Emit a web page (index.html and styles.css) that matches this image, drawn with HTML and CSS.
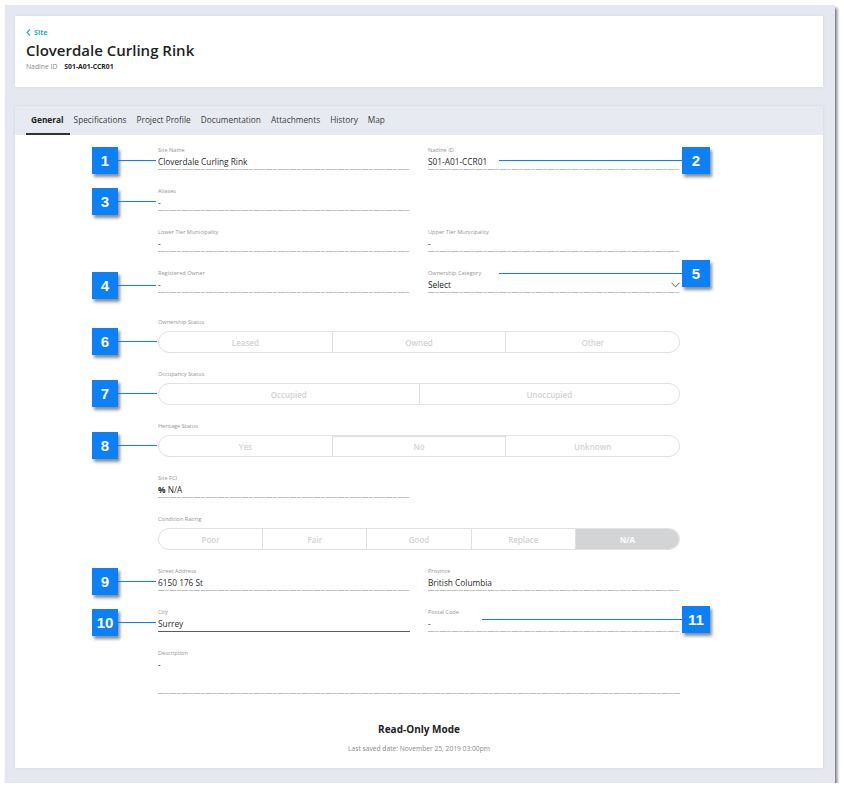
FILE: index.html
```html
<!DOCTYPE html>
<html lang="en">
<head>
<meta charset="utf-8">
<title>Cloverdale Curling Rink</title>
<link rel="stylesheet" href="styles.css">
</head>
<body>
<div class="frame">
  <header class="head-card">
    <a class="back"><svg class="back-icon" width="5" height="7" viewBox="0 0 5 7"><polyline points="4,0.5 1,3.5 4,6.5" fill="none" stroke="#1fb1b3" stroke-width="1.1"/></svg>Site</a>
    <h1 class="title">Cloverdale Curling Rink</h1>
    <div class="ident"><span class="ident-label">Nadine ID</span><span class="ident-value">S01-A01-CCR01</span></div>
  </header>

  <section class="main-card">
    <nav class="tabs">
      <span class="tab active">General</span>
      <span class="tab">Specifications</span>
      <span class="tab">Project Profile</span>
      <span class="tab">Documentation</span>
      <span class="tab">Attachments</span>
      <span class="tab">History</span>
      <span class="tab">Map</span>
    </nav>

    <div class="form">
      <div class="row">
        <div class="field">
          <div class="label">Site Name</div>
          <div class="value">Cloverdale Curling Rink</div>
          <div class="callout callout-left"><span class="badge">1</span><span class="leader"></span></div>
        </div>
        <div class="field">
          <div class="label">Nadine ID</div>
          <div class="value">S01-A01-CCR01</div>
          <div class="callout callout-right c2"><span class="leader"></span><span class="badge">2</span></div>
        </div>
      </div>

      <div class="row">
        <div class="field">
          <div class="label">Aliases</div>
          <div class="value">-</div>
          <div class="callout callout-left"><span class="badge">3</span><span class="leader"></span></div>
        </div>
      </div>

      <div class="row">
        <div class="field">
          <div class="label">Lower Tier Municipality</div>
          <div class="value">-</div>
        </div>
        <div class="field">
          <div class="label">Upper Tier Municipality</div>
          <div class="value">-</div>
        </div>
      </div>

      <div class="row">
        <div class="field">
          <div class="label">Registered Owner</div>
          <div class="value">-</div>
          <div class="callout callout-left low"><span class="badge">4</span><span class="leader"></span></div>
        </div>
        <div class="field">
          <div class="label">Ownership Category</div>
          <div class="value select">Select<svg class="chev" width="9" height="6" viewBox="0 0 9 6"><polyline points="0.5,0.8 4.5,4.8 8.5,0.8" fill="none" stroke="#555" stroke-width="1"/></svg></div>
          <div class="callout callout-right c5"><span class="leader"></span><span class="badge">5</span></div>
        </div>
      </div>

      <div class="group spaced">
        <div class="label">Ownership Status</div>
        <div class="seg">
          <span class="seg-item">Leased</span>
          <span class="seg-item">Owned</span>
          <span class="seg-item">Other</span>
        </div>
        <div class="callout callout-left seg-callout"><span class="badge">6</span><span class="leader"></span></div>
      </div>

      <div class="group">
        <div class="label">Occupancy Status</div>
        <div class="seg">
          <span class="seg-item">Occupied</span>
          <span class="seg-item">Unoccupied</span>
        </div>
        <div class="callout callout-left seg-callout"><span class="badge">7</span><span class="leader"></span></div>
      </div>

      <div class="group">
        <div class="label">Heritage Status</div>
        <div class="seg">
          <span class="seg-item">Yes</span>
          <span class="seg-item pressed">No</span>
          <span class="seg-item">Unknown</span>
        </div>
        <div class="callout callout-left seg-callout"><span class="badge">8</span><span class="leader"></span></div>
      </div>

      <div class="row">
        <div class="field">
          <div class="label">Site FCI</div>
          <div class="value"><b class="pct">%</b> N/A</div>
        </div>
      </div>

      <div class="group">
        <div class="label">Condition Rating</div>
        <div class="seg">
          <span class="seg-item">Poor</span>
          <span class="seg-item">Fair</span>
          <span class="seg-item">Good</span>
          <span class="seg-item">Replace</span>
          <span class="seg-item selected">N/A</span>
        </div>
      </div>

      <div class="row">
        <div class="field">
          <div class="label">Street Address</div>
          <div class="value">6150 176 St</div>
          <div class="callout callout-left"><span class="badge">9</span><span class="leader"></span></div>
        </div>
        <div class="field">
          <div class="label">Province</div>
          <div class="value">British Columbia</div>
        </div>
      </div>

      <div class="row">
        <div class="field">
          <div class="label">City</div>
          <div class="value solid">Surrey</div>
          <div class="callout callout-left"><span class="badge">10</span><span class="leader"></span></div>
        </div>
        <div class="field">
          <div class="label">Postal Code</div>
          <div class="value">-</div>
          <div class="callout callout-right c11"><span class="leader"></span><span class="badge">11</span></div>
        </div>
      </div>

      <div class="field">
        <div class="label">Description</div>
        <div class="value tall">-</div>
      </div>
    </div>

    <footer class="status">
      <div class="status-title">Read-Only Mode</div>
      <div class="status-date">Last saved date: November 25, 2019 03:00pm</div>
    </footer>
  </section>
</div>
</body>
</html>
```
FILE: styles.css
```css
* { box-sizing: border-box; }

body {
  margin: 0;
  background: #ffffff;
  font-family: "Open Sans", "Noto Sans", "Liberation Sans", sans-serif;
  color: #333;
}

.frame {
  margin: 5px 0 0 5px;
  width: 830px;
  height: 778px;
  background: #e5e8f0;
  box-shadow: 2px 3px 3px rgba(0, 0, 0, 0.55);
  padding: 11px 12px 0 10px;
}

/* header card */
.head-card {
  height: 71px;
  background: #fff;
  padding: 11px 11px 0;
  box-shadow: 0 0 3px rgba(0, 0, 0, 0.08);
}

.back {
  display: flex;
  align-items: center;
  gap: 3px;
  height: 10px;
  font-size: 7.2px;
  font-weight: 700;
  color: #1fb1b3;
}

.title {
  margin: 3px 0 0;
  font-size: 15px;
  line-height: 20px;
  font-weight: 600;
  color: #222;
}

.ident {
  margin-top: 2px;
  display: flex;
  gap: 7px;
  font-size: 6.8px;
  line-height: 10px;
}
.ident-label { color: #8a8a8a; }
.ident-value { color: #222; font-weight: 700; }

/* main card */
.main-card {
  margin-top: 19px;
  background: #fff;
  box-shadow: 0 0 3px rgba(0, 0, 0, 0.08);
  padding-bottom: 14px;
}

.tabs {
  display: flex;
  height: 29px;
  background: #e7eaf1;
  padding-left: 11px;
}

.tab {
  padding: 0 5px;
  font-size: 8.3px;
  line-height: 28px;
  color: #3c3c3c;
}

.tab.active {
  font-weight: 700;
  color: #222;
  padding: 0 6px 0 5px;
  margin-right: -1px;
  box-shadow: inset 0 -2px 0 #333;
}

/* form */
.form {
  position: relative;
  padding: 11px 143px 0;
  display: flex;
  flex-direction: column;
  gap: 17px;
}

.row {
  display: grid;
  grid-template-columns: 252px 252px;
  column-gap: 18px;
}

.field, .group { position: relative; }

.label {
  font-size: 5.6px;
  line-height: 8px;
  color: #959595;
}

.value {
  margin-top: 2px;
  font-size: 8.3px;
  line-height: 12px;
  color: #2a2a2a;
  background: repeating-linear-gradient(90deg, #bcbcbc 0 6px, #e4e4e4 6px 7px, #c4c4c4 7px 11px, #ececec 11px 12px) left bottom / 100% 1px no-repeat;
  padding-bottom: 2px;
}

.value.solid {
  background: linear-gradient(#5c5c5c, #5c5c5c) left bottom / 100% 1px no-repeat;
}

.value.tall { min-height: 35px; }

.value.select {
  display: flex;
  justify-content: space-between;
  align-items: center;
  color: #222;
}

.pct { font-weight: 700; }

.spaced { margin-top: 8px; }

/* segmented controls */
.seg {
  margin-top: 5px;
  display: flex;
  height: 22px;
  border: 1px solid #e1e1e1;
  border-radius: 11px;
  overflow: hidden;
}

.seg-item {
  flex: 1;
  display: flex;
  align-items: center;
  justify-content: center;
  font-size: 8px;
  font-weight: 600;
  color: #d2d2d2;
  border-left: 1px solid #e1e1e1;
}
.seg-item:first-child { border-left: 0; }
.seg-item.pressed { box-shadow: inset 0 2px 1px -1px rgba(0, 0, 0, 0.14); }
.seg-item.selected { background: #d3d4d6; color: #fff; font-weight: 700; }

/* annotation callouts */
.callout {
  position: absolute;
  display: flex;
  align-items: center;
  height: 27px;
}

.callout-left { left: -66px; top: 1px; width: 64px; }
.callout-left.low { top: 3px; }
.callout-left.seg-callout { top: 10px; width: 65px; }

.callout-right { right: -30px; }
.c2 { left: 71px; top: 1px; }
.c5 { left: 71px; top: -9px; }
.c11 { left: 54px; top: -2px; }

.badge {
  flex: none;
  width: 26px;
  height: 27px;
  background: #0b80f7;
  color: #fff;
  font-family: "Liberation Sans Narrow", "Liberation Sans", Arial, sans-serif;
  font-stretch: condensed;
  font-weight: 700;
  font-size: 15px;
  line-height: 27px;
  text-align: center;
  box-shadow: 2px 3px 3px rgba(0, 0, 0, 0.45);
}
.callout-right .badge { width: 28px; }

.leader {
  flex: 1;
  height: 1px;
  background: #0b80f7;
}

/* footer */
.status {
  margin-top: 28px;
  text-align: center;
}

.status-title {
  font-size: 10px;
  line-height: 14px;
  font-weight: 700;
  color: #222;
}

.status-date {
  margin-top: 8px;
  font-size: 6.7px;
  line-height: 10px;
  color: #8a8a8a;
}
```
